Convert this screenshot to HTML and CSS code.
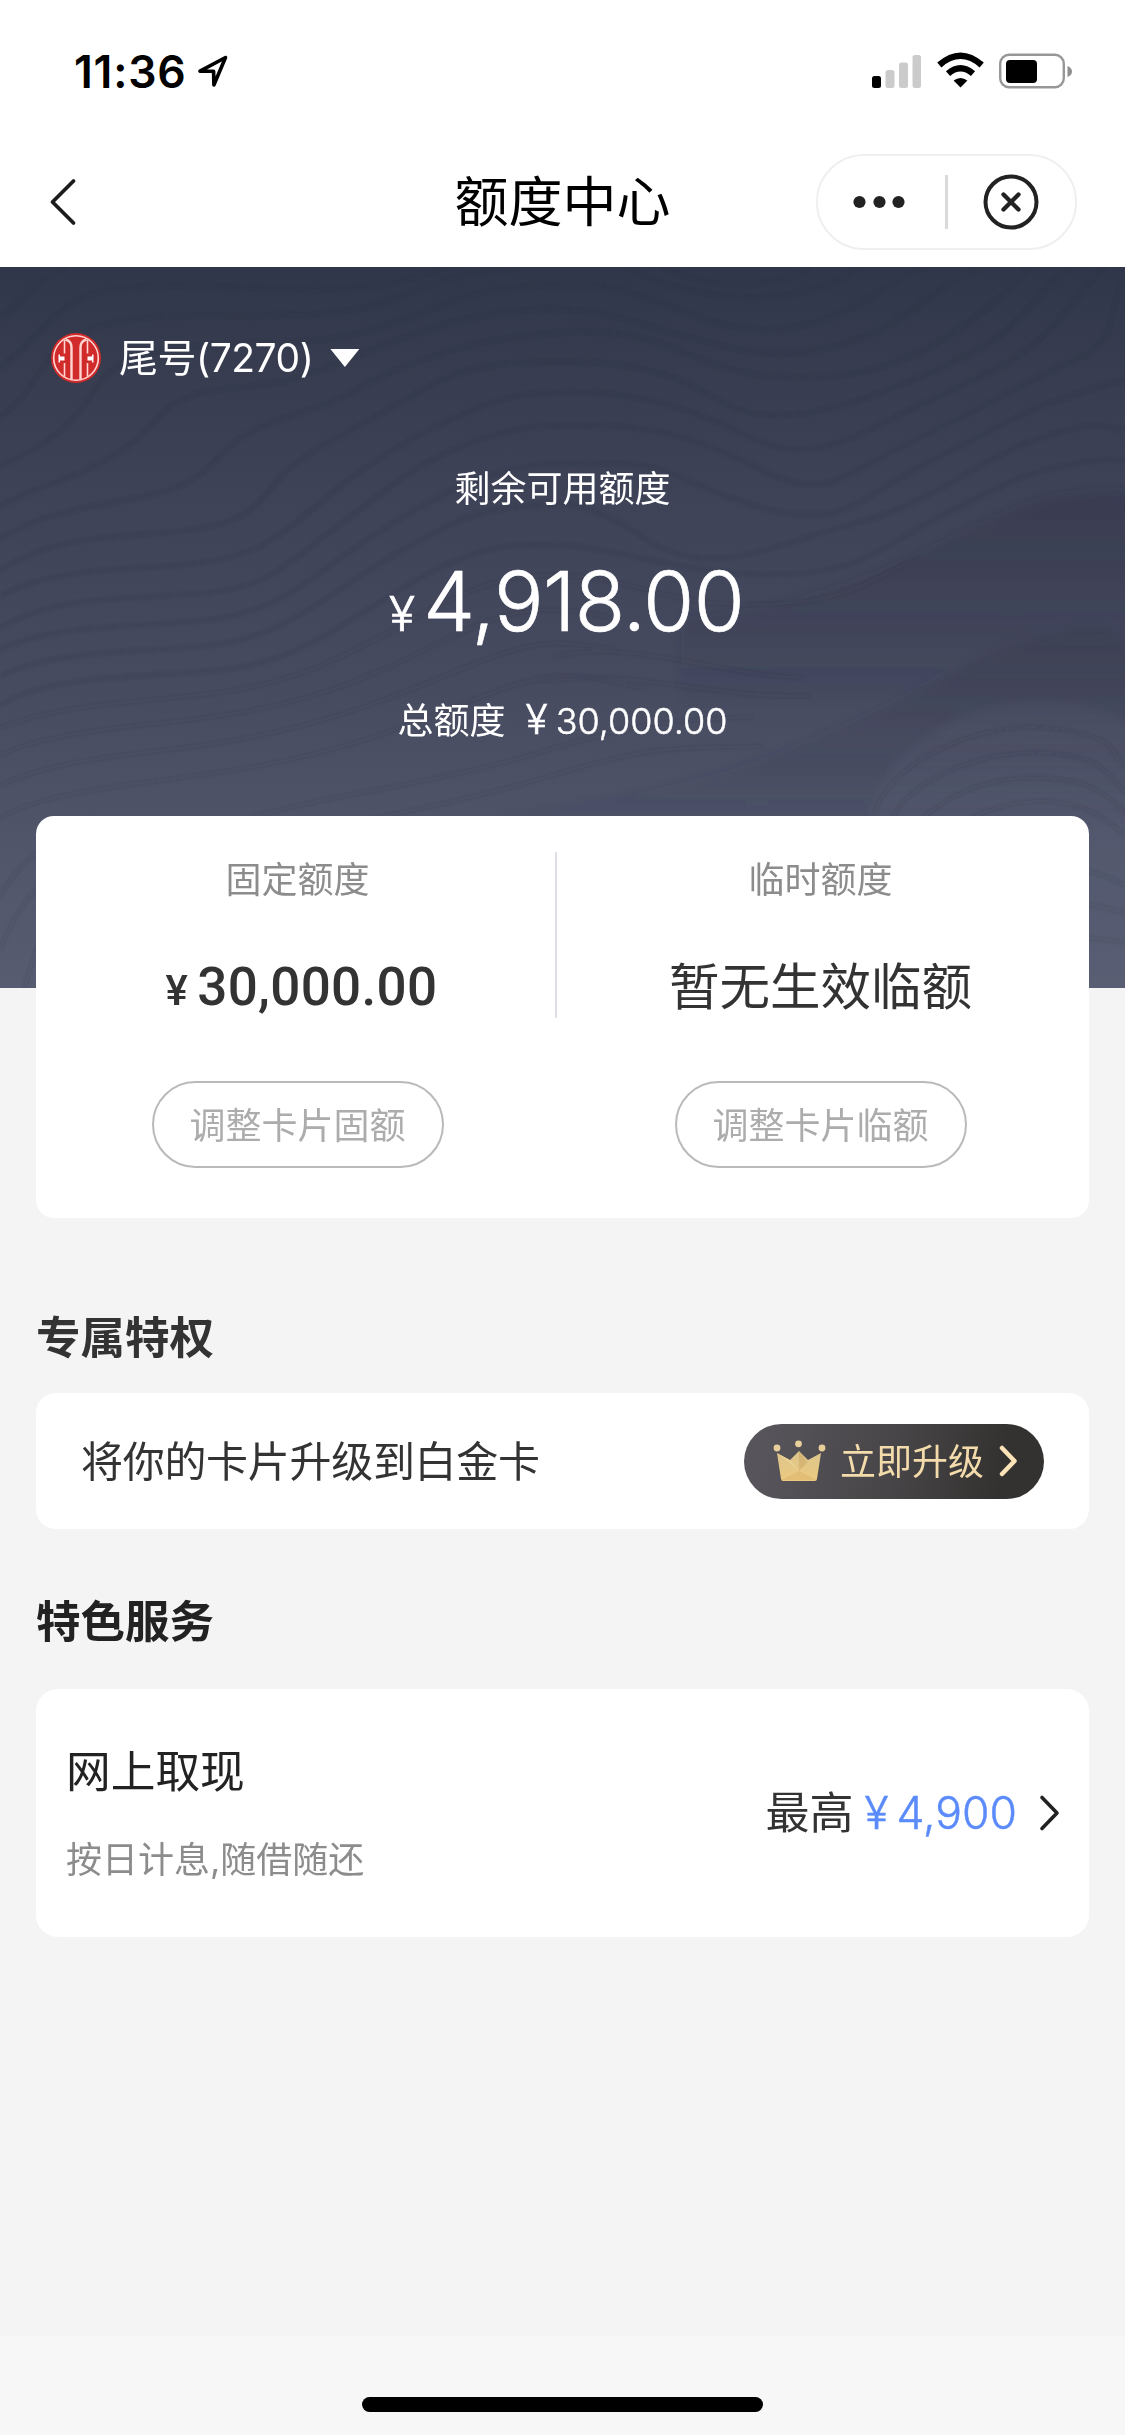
FILE: index.html
```html
<!DOCTYPE html>
<html lang="zh-CN">
<head>
<meta charset="utf-8">
<title>额度中心</title>
<link rel="stylesheet" href="styles.css">
</head>
<body>
<div class="screen">
  <header class="status">
    <div class="status-left">
      <span class="time">11:36</span>
      <svg class="locate" width="32" height="34" viewBox="0 0 32 34"><path d="M28.500 3.500 L3 17.200 H16.600 L16.900 31 Z" fill="none" stroke="#000" stroke-width="3.600" stroke-linejoin="round"/></svg>
    </div>
    <svg class="indicators" width="204" height="38" viewBox="0 0 204 38">
      <rect x="1" y="25" width="9" height="12" rx="2.500"/>
      <g fill="#cbcbcb"><rect x="14.500" y="19" width="9" height="18" rx="2.500"/><rect x="28" y="11.500" width="9" height="25.500" rx="2.500"/><rect x="41.500" y="4" width="8.500" height="33" rx="2.500"/></g>
      <path d="M89.500 36.500 L82.600 29.600 Q89.500 24.200 96.400 29.600 Z"/>
      <g fill="none" stroke="#000" stroke-width="6.400"><path d="M77 22.600 Q89.500 12 102 22.600"/><path d="M68.300 14 Q89.500 -4.500 110.700 14"/></g>
      <rect x="129.200" y="3.700" width="63.600" height="32.600" rx="9" fill="none" stroke="#979797" stroke-width="2.400"/>
      <rect x="135" y="9" width="31" height="23" rx="4"/>
      <path d="M196.500 15 Q201 17 201 20.500 Q201 24 196.500 26 Z" fill="#8f8f8f"/>
    </svg>
  </header>

  <nav class="nav">
    <svg class="back" width="30" height="50" viewBox="0 0 30 50"><path d="M25.500 4 L4.500 25 L25.500 46" fill="none" stroke="#1c1c1c" stroke-width="3.800" stroke-linecap="round" stroke-linejoin="round"/></svg>
    <h1 class="nav-title">额度中心</h1>
    <div class="capsule">
      <svg class="more" width="54" height="14" viewBox="0 0 54 14" fill="#222"><circle cx="7.500" cy="7" r="6.100"/><circle cx="27.500" cy="7" r="6.100"/><circle cx="46.500" cy="7" r="6.100"/></svg>
      <span class="capsule-line"></span>
      <svg class="close" width="56" height="56" viewBox="0 0 56 56" fill="none" stroke="#222"><circle cx="28" cy="28" r="25.500" stroke-width="4"/><path d="M20.500 20.500 L35.500 35.500 M35.500 20.500 L20.500 35.500" stroke-width="4.300" stroke-linecap="round"/></svg>
    </div>
  </nav>

  <section class="hero">
    <svg class="waves" viewBox="0 20 3139 2018" preserveAspectRatio="none">
      <defs>
        <linearGradient id="fadeA" x1="0" y1="650" x2="0" y2="1250" gradientUnits="userSpaceOnUse"><stop offset="0" stop-color="#33364a" stop-opacity=".4"/><stop offset="1" stop-color="#33364a" stop-opacity="0"/></linearGradient>
        <linearGradient id="fadeB" x1="0" y1="1040" x2="0" y2="1600" gradientUnits="userSpaceOnUse"><stop offset="0" stop-color="#363a4c" stop-opacity=".4"/><stop offset="1" stop-color="#363a4c" stop-opacity="0"/></linearGradient>
        <filter id="soft" x="-5%" y="-5%" width="110%" height="110%"><feGaussianBlur stdDeviation="5"/></filter>
        <filter id="softer" x="-5%" y="-5%" width="110%" height="110%"><feGaussianBlur stdDeviation="12"/></filter>
      </defs>
      <g filter="url(#softer)">
        <path d="M1900 1000 C2250 980 2450 880 2640 790 S2900 660 3060 652 S3139 670 3180 680 V1300 H1900 Z" fill="url(#fadeA)"/>
        <path d="M1400 1540 C1850 1500 2100 1420 2370 1300 S2750 1080 2950 1042 S3139 1080 3180 1100 V1700 H1400 Z" fill="url(#fadeB)"/>
        <path d="M2430 1600 C2430 1400 2650 1230 2920 1240 S3139 1330 3180 1370 V2060 H2430 Z" fill="#666c82" opacity=".16"/>
      </g>
      <g class="ridges" filter="url(#soft)">
        <path d="M0 160 C60 130 90 60 180 20"/>
        <path d="M0 300 C120 220 150 100 330 80 S800 90 960 80 S1160 50 1250 20"/>
        <path d="M0 440 C100 370 100 290 200 220 S480 155 700 155 S1000 150 1150 90 S1350 35 1450 20"/>
        <path d="M0 575 C200 490 220 420 290 330 S560 235 800 230 S1150 150 1280 110 S1450 75 1600 70 S1850 130 2000 175 S2300 190 2450 90 S2560 40 2600 20"/>
        <path d="M0 690 C100 630 200 620 330 540 S430 380 640 360 S850 320 950 285 S1200 180 1350 155 S1560 135 1650 145 S1900 220 2060 250 S2400 250 2560 130 S2700 50 2740 20"/>
        <path d="M0 780 C150 690 300 690 450 650 S600 530 700 480 S900 420 1000 360 S1300 230 1450 215 S1630 195 1750 210 S1980 310 2150 325 S2500 320 2680 190 S2830 60 2870 20"/>
        <path d="M0 870 C150 770 300 780 500 760 S720 680 780 610 S1000 470 1150 380 S1400 285 1568 285 S1850 300 2000 390 S2350 420 2560 330 S2820 200 2900 100 S2980 35 3000 20"/>
        <path d="M0 940 C150 865 300 870 500 855 S760 790 880 690 S1100 520 1250 450 S1450 370 1600 370 S1900 400 2080 490 S2350 510 2580 400 S2870 270 2960 160 S3060 40 3080 20"/>
        <path d="M0 1030 C150 940 350 950 550 935 S800 850 950 740 S1150 570 1320 510 S1530 465 1680 465 S1950 500 2130 590 S2350 600 2560 500 S2860 340 3000 280 S3080 130 3139 60"/>
        <path d="M0 1090 C150 1020 350 1030 560 1010 S850 900 1000 800 S1250 640 1380 600 S1560 570 1720 570 S1900 630 2130 695 S2400 660 2620 550 S2860 420 2990 380 S3080 345 3139 340"/>
        <path d="M0 1165 C150 1090 380 1100 580 1080 S880 960 1060 850 S1330 700 1450 690 S1620 660 1800 780 S2150 800 2380 740 S2720 560 2900 500 S3060 470 3139 475"/>
        <path d="M0 1245 C150 1160 380 1170 600 1150 S920 1040 1120 920 S1420 790 1580 800 S1900 880 2150 880 S2430 820 2620 720 S2880 590 3000 570 S3100 560 3139 565"/>
        <path d="M1750 20 C1850 80 2050 120 2180 100 S2360 50 2400 20"/>
        <path d="M1850 20 C1920 60 2050 80 2150 60 S2240 35 2260 20"/>
      </g>
      <g class="ridges faint" filter="url(#soft)">
        <path d="M0 1310 C170 1240 400 1240 620 1210 S980 1100 1180 990 S1500 870 1650 890 S1900 970 2120 965 S2400 920 2560 830"/>
        <path d="M0 1385 C170 1310 400 1310 650 1270 S1050 1160 1250 1060 S1550 970 1700 1000"/>
        <path d="M0 1470 C200 1380 420 1390 680 1340 S1080 1230 1300 1140 S1560 1070 1720 1090"/>
        <path d="M0 1560 C180 1470 420 1470 700 1420 S1120 1310 1350 1220 S1640 1170 1800 1200"/>
        <path d="M700 1560 C900 1500 1200 1470 1500 1380 S1850 1290 2100 1280"/>
        <path d="M650 1640 C950 1580 1250 1530 1550 1440 S1900 1370 2130 1360"/>
        <path d="M1550 1110 C1750 1060 2000 1160 2240 1170"/>
        <path d="M1500 1180 C1750 1140 2000 1230 2260 1220"/>
        <path d="M0 1780 C60 1680 120 1640 260 1560"/>
        <path d="M0 1930 C60 1780 120 1730 300 1600"/>
        <path d="M70 2038 C100 1900 140 1850 300 1760"/>
        <path d="M2440 1560 C2460 1420 2720 1290 2920 1310 S3090 1370 3139 1420"/>
        <path d="M2480 1580 C2540 1440 2760 1370 2920 1380 S3090 1440 3139 1490"/>
        <path d="M2560 1580 C2640 1490 2780 1440 2920 1450 S3090 1500 3139 1550"/>
        <path d="M2680 1580 C2740 1540 2840 1510 2930 1515 S3080 1560 3139 1610"/>
        <path d="M2920 1700 C3000 1690 3080 1720 3139 1750 M2920 1800 C3000 1790 3080 1810 3139 1830 M2920 1900 C3000 1890 3080 1900 3139 1910"/>
      </g>
    </svg>
    <div class="hero-body">
      <div class="picker">
        <svg class="bank" width="52" height="52" viewBox="0 0 52 52">
          <circle cx="26" cy="26" r="25" fill="#d12a2a"/>
          <g fill="none" stroke="#ffd5d2" stroke-width="1.600">
            <circle cx="26" cy="26" r="22.300"/>
            <path d="M14.500 8 V21.500 M14.500 31 V44.500 M37.500 8 V21.500 M37.500 31 V44.500"/>
            <path d="M15.500 7.500 Q21.500 9 21.500 15.500 V47.500 M36.500 7.500 Q30.500 9 30.500 15.500 V47.500" stroke-width="2.400"/>
          </g>
          <path d="M8.500 22.500 H10 V24.500 H14.500 V28.500 H10 V30.500 H8.500 Z M43.500 22.500 H42 V24.500 H37.500 V28.500 H42 V30.500 H43.500 Z" fill="#fff"/>
        </svg>
        <span class="picker-text">尾号(7270)</span>
        <span class="caret"></span>
      </div>
      <p class="hero-label">剩余可用额度</p>
      <p class="hero-amount"><span class="yen">¥</span><span>4,918.00</span></p>
      <p class="hero-total"><span>总额度</span><span class="total-yen">¥</span><span class="total-num">30,000.00</span></p>
    </div>
  </section>

  <main class="content">
    <section class="limits">
      <div class="limit">
        <p class="limit-label">固定额度</p>
        <p class="limit-value num"><span class="yen">¥</span><span>30,000.00</span></p>
        <button class="pill">调整卡片固额</button>
      </div>
      <div class="limit second">
        <p class="limit-label">临时额度</p>
        <p class="limit-value">暂无生效临额</p>
        <button class="pill">调整卡片临额</button>
      </div>
    </section>

    <h2 class="title">专属特权</h2>
    <section class="upgrade">
      <span class="upgrade-text">将你的卡片升级到白金卡</span>
      <button class="upgrade-btn">
        <svg width="54" height="42" viewBox="0 0 54 42">
          <defs><linearGradient id="gold" x1="0" y1="0" x2="0" y2="1"><stop offset="0" stop-color="#dcc58c"/><stop offset="1" stop-color="#ecca80"/></linearGradient></defs>
          <path d="M4 13 L17 20 L26 11 L35 20 L48 13 L44 39 Q43.500 41 42 41 H10 Q8.500 41 8 39 Z" fill="url(#gold)"/>
          <path d="M26 11 L34.500 22.500 L26 31 Z" fill="#cfaa68" opacity=".6"/>
          <path d="M8.500 40 L26 31 L43.500 40 Z" fill="#dbb269" opacity=".5"/>
          <path d="M4 13 L26 31 L17 20 Z" fill="#f0d79c" opacity=".6"/>
          <g fill="#e8d09a"><circle cx="4" cy="8" r="3.400"/><circle cx="25.500" cy="3.800" r="3.400"/><circle cx="49" cy="8" r="3.400"/></g>
        </svg>
        <span>立即升级</span>
        <svg width="20" height="34" viewBox="0 0 20 34"><path d="M3 4 L15.500 17 L3 30" fill="none" stroke="#fce3b8" stroke-width="4.500" stroke-linecap="round" stroke-linejoin="round"/></svg>
      </button>
    </section>

    <h2 class="title dark">特色服务</h2>
    <section class="cash">
      <div class="cash-info">
        <h3>网上取现</h3>
        <p>按日计息,随借随还</p>
      </div>
      <div class="cash-max">
        <span>最高</span><span class="blue yen">¥</span><span class="blue">4,900</span>
        <svg width="22" height="40" viewBox="0 0 22 40"><path d="M3 4.500 L18 20 L3 35.500" fill="none" stroke="#222" stroke-width="3.600" stroke-linecap="round" stroke-linejoin="round"/></svg>
      </div>
    </section>
  </main>

  <footer class="home"><span class="home-bar"></span></footer>
</div>
</body>
</html>
```
FILE: styles.css
```css
* { box-sizing: border-box; margin: 0; padding: 0; }
body {
  width: 1125px;
  font-family: Inter, "Noto Sans CJK SC", sans-serif;
  font-weight: 400;
  color: #333;
  background: #f4f4f4;
}
h1, h2, h3 { font-weight: 400; }
button { font: inherit; background: none; border: 0; }

.screen { width: 1125px; height: 2435px; display: flex; flex-direction: column; overflow: hidden; }

.status {
  height: 136px; padding: 0 50px 0 74px; background: #fff;
  display: flex; justify-content: space-between; align-items: flex-start;
}
.status-left { display: flex; align-items: flex-start; }
.time { margin-top: 42px; line-height: 60px; font-size: 44.500px; font-weight: 600; color: #000; letter-spacing: 0.8px; }
.locate { margin: 54px 0 0 10px; }
.indicators { margin-top: 51px; }

.nav {
  height: 131px; padding: 0 48px; background: #fff;
  display: grid; grid-template-columns: 261px 1fr 261px; align-items: center;
}
.nav-title { padding-top: 2px; font-size: 54px; line-height: 70px; text-align: center; color: #000; }
.capsule {
  width: 261px; height: 96px; border: 2px solid #efefef; border-radius: 48px;
  display: flex; align-items: center;
}
.more { margin-left: 34px; }
.capsule-line { width: 3px; height: 54px; margin-left: 39px; background: #d9d9d9; }
.close { margin-left: 35px; }

.hero {
  position: relative; height: 721px; flex: none;
  background: linear-gradient(#31374a 0%, #3e4256 30%, #474b60 58%, #51566b 82%, #575c71 100%);
}
.waves { position: absolute; inset: 0; width: 100%; height: 100%; }
.ridges path { fill: none; stroke: #2b2e42; stroke-width: 9; opacity: .22; }
.ridges.faint path { opacity: .11; }
.hero-body { position: relative; padding-top: 61px; color: #fff; text-align: center; }
.picker { display: flex; align-items: center; height: 60px; padding-left: 50px; }
.picker-text { margin-left: 17px; font-size: 39px; line-height: 60px; letter-spacing: -0.5px; }
.caret { width: 29px; height: 18px; margin-left: 17px; background: #fff; clip-path: polygon(0 0, 100% 0, 50% 100%); }
.hero-label { margin-top: 76px; font-size: 36px; line-height: 50px; }
.hero-amount {
  margin-top: 37px; padding-left: 8px; height: 100px; line-height: 100px; font-size: 82.500px; font-weight: 300; letter-spacing: -0.6px;
  -webkit-text-stroke: 0.7px #fff;
  display: flex; justify-content: center; align-items: baseline;
}
.hero-amount .yen { font-size: 48px; margin-right: 9px; }
.hero-total {
  margin-top: 43px; height: 50px; line-height: 50px; font-size: 36px;
  display: flex; justify-content: center; align-items: baseline;
}
.total-yen { margin: 0 8px 0 20px; font-size: 41px; font-weight: 300; -webkit-text-stroke: 0.5px #fff; }
.total-num { font-weight: 300; -webkit-text-stroke: 0.5px #fff; }

.content { position: relative; flex: 1; padding: 0 36px; margin-top: -172px; display: flex; flex-direction: column; }
.limits {
  height: 402px; padding: 36px 6px 0 0; background: #fff; border-radius: 18px;
  display: grid; grid-template-columns: 523px 523px;
}
.limit { display: flex; flex-direction: column; align-items: center; padding-top: 3px; }
.second { background: linear-gradient(#dedee6, #dedee6) 0 0 / 2px 166px no-repeat; margin-left: -4px; padding-left: 4px; }
.limit-label { font-size: 36px; line-height: 50px; color: #8c8c8c; }
.limit-value { margin-top: 52px; height: 60px; line-height: 60px; font-size: 50.500px; color: #333; }
.num { display: flex; align-items: baseline; font-family: Roboto, Inter, sans-serif; font-size: 53px; font-weight: 500; letter-spacing: 0.3px; padding-left: 8px; }
.num .yen { font-size: 42px; margin-right: 9px; }
.pill {
  width: 292px; height: 87px; margin-top: 64px; padding-bottom: 4px; border: 2px solid #bababa; border-radius: 44px;
  font-size: 36px; color: #acacac;
}

.title { margin-top: 90px; font-size: 44.500px; line-height: 60px; font-weight: 600; color: #333; }
.title.dark { margin-top: 63px; color: #222; }
.upgrade {
  height: 136px; margin-top: 25px; padding: 0 45px 0 45px; background: #fff; border-radius: 20px;
  display: flex; justify-content: space-between; align-items: center;
}
.upgrade-text { padding-top: 2px; font-size: 42px; line-height: 60px; letter-spacing: -0.3px; }
.upgrade-btn {
  width: 300px; height: 75px; padding-left: 29px; border-radius: 38px;
  background: linear-gradient(100deg, #57545b 8%, #474547 50%, #343230 85%);
  color: #f3dbac; font-size: 36px; display: flex; align-items: center;
}
.upgrade-btn span { margin: -4px 15px 0 13px; }

.cash {
  height: 248px; margin-top: 37px; padding: 0 28px 0 30px; background: #fff; border-radius: 22px;
  display: flex; justify-content: space-between; align-items: center;
}
.cash-info h3 { padding-top: 1px; font-size: 44.700px; line-height: 60px; color: #222; }
.cash-info p { margin-top: 33px; font-size: 36px; line-height: 50px; color: #8c8c8c; }
.cash-max { display: flex; align-items: center; font-size: 44px; line-height: 60px; }
.blue { color: #5b8bfb; font-weight: 300; font-size: 44.500px; -webkit-text-stroke: 0.5px #5b8bfb; }
.blue.yen { margin: 0 8px 0 11px; }
.cash-max svg { margin-left: 22px; }

.home { height: 99px; background: #f7f7f7; display: flex; justify-content: center; padding-top: 61px; }
.home-bar { width: 401px; height: 15px; border-radius: 8px; background: #000; }
```
